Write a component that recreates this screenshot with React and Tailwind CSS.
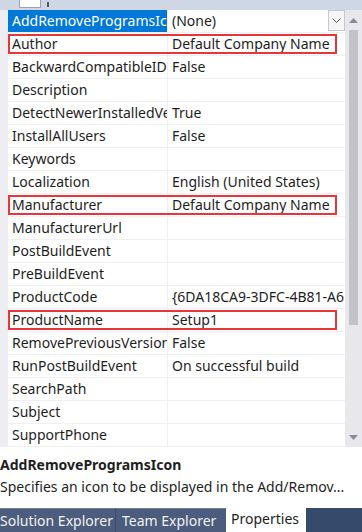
const rows = [
  { name: 'AddRemoveProgramsIcon', value: '(None)', selected: true },
  { name: 'Author', value: 'Default Company Name', marked: true },
  { name: 'BackwardCompatibleIDGeneration', value: 'False' },
  { name: 'Description', value: '' },
  { name: 'DetectNewerInstalledVersion', value: 'True' },
  { name: 'InstallAllUsers', value: 'False' },
  { name: 'Keywords', value: '' },
  { name: 'Localization', value: 'English (United States)' },
  { name: 'Manufacturer', value: 'Default Company Name', marked: true },
  { name: 'ManufacturerUrl', value: '' },
  { name: 'PostBuildEvent', value: '' },
  { name: 'PreBuildEvent', value: '' },
  { name: 'ProductCode', value: '{6DA18CA9-3DFC-4B81-A6E2-1F3C5B2D7E90}' },
  { name: 'ProductName', value: 'Setup1', marked: true },
  { name: 'RemovePreviousVersions', value: 'False' },
  { name: 'RunPostBuildEvent', value: 'On successful build' },
  { name: 'SearchPath', value: '' },
  { name: 'Subject', value: '' },
  { name: 'SupportPhone', value: '' },
]

const PropRow = ({ row }) => {
  return (
    <div className="relative flex h-[23px] border-b border-[#f0f0f0]">
      <div
        className={
          'w-[160px] shrink-0 pl-[4px] overflow-hidden whitespace-nowrap leading-[22px] border-r border-[#f0f0f0] ' +
          (row.selected ? 'bg-[#0078d7] text-white' : 'text-[#1e1e1e]')
        }
      >
        {row.name}
      </div>
      <div className="flex-1 min-w-0 pl-[4px] overflow-hidden whitespace-nowrap leading-[22px] text-[#1e1e1e]">
        {row.value}
      </div>
      {row.selected && (
        <div className="absolute right-0 top-0 w-[17px] h-[21px] bg-[#f5f5f7] border border-[#c8c9d0] flex items-center justify-center">
          <svg width="9" height="5" viewBox="0 0 9 5">
            <path d="M0.5 0.5 L4.5 4.5 L8.5 0.5" fill="none" stroke="#555" strokeWidth="1" />
          </svg>
        </div>
      )}
      {row.marked && (
        <div className="absolute left-0 right-[8px] top-[1px] bottom-[1px] border-2 border-[#e8353b]" />
      )}
    </div>
  )
}

export default function App() {
  return (
    <div className="w-[362px] h-[532px] overflow-hidden bg-white flex flex-col font-['Noto_Sans',sans-serif] text-[14px]">
      {/* toolbar remnant */}
      <div className="h-[10px] shrink-0 bg-[#cfd6e5] relative">
        <div className="absolute left-[19px] top-[-6px] w-[22px] h-[14px] bg-white border border-[#9aa3b5]" />
        <div className="absolute left-[47px] top-[2px] w-[2px] h-[5px] bg-[#555]" />
      </div>

      {/* property grid */}
      <div className="flex shrink-0 h-[437px]">
        <div className="w-[8px] shrink-0 bg-[#eeeef2]" />
        <div className="flex-1 min-w-0 flex flex-col">
          {rows.map((row) => (
            <PropRow key={row.name} row={row} />
          ))}
        </div>
        <div className="w-[17px] shrink-0 bg-[#e8e8ec] flex flex-col items-center">
          <div className="h-[20px] flex items-center justify-center">
            <svg width="9" height="5" viewBox="0 0 9 5">
              <path d="M4.5 0 L9 5 L0 5 Z" fill="#868999" />
            </svg>
          </div>
          <div className="w-[9px] h-[295px] bg-[#c2c3c9]" />
          <div className="flex-1" />
          <div className="h-[20px] flex items-center justify-center">
            <svg width="9" height="5" viewBox="0 0 9 5">
              <path d="M0 0 L9 0 L4.5 5 Z" fill="#868999" />
            </svg>
          </div>
        </div>
      </div>

      {/* description */}
      <div className="flex-1 min-h-0 pt-[7px] text-[#1e1e1e]">
        <div className="font-bold leading-[22px] whitespace-nowrap">AddRemoveProgramsIcon</div>
        <div className="leading-[22px] whitespace-nowrap overflow-hidden">Specifies an icon to be displayed in the Add/Remov...</div>
      </div>

      {/* tabs */}
      <div className="h-[24px] shrink-0 flex bg-[#364a6b]">
        <div className="w-[116px] leading-[23px] whitespace-nowrap overflow-hidden bg-[#4b5c7d] text-[#f2f2f2] border-t border-[#6e7fa0] border-r border-r-[#3c4c6a]">
          Solution Explorer
        </div>
        <div className="w-[110px] pl-[6px] leading-[23px] whitespace-nowrap overflow-hidden bg-[#4b5c7d] text-[#f2f2f2] border-t border-[#6e7fa0]">
          Team Explorer
        </div>
        <div className="w-[80px] pl-[5px] leading-[22px] whitespace-nowrap bg-white text-[#1e1e1e]">
          Properties
        </div>
      </div>
    </div>
  )
}
